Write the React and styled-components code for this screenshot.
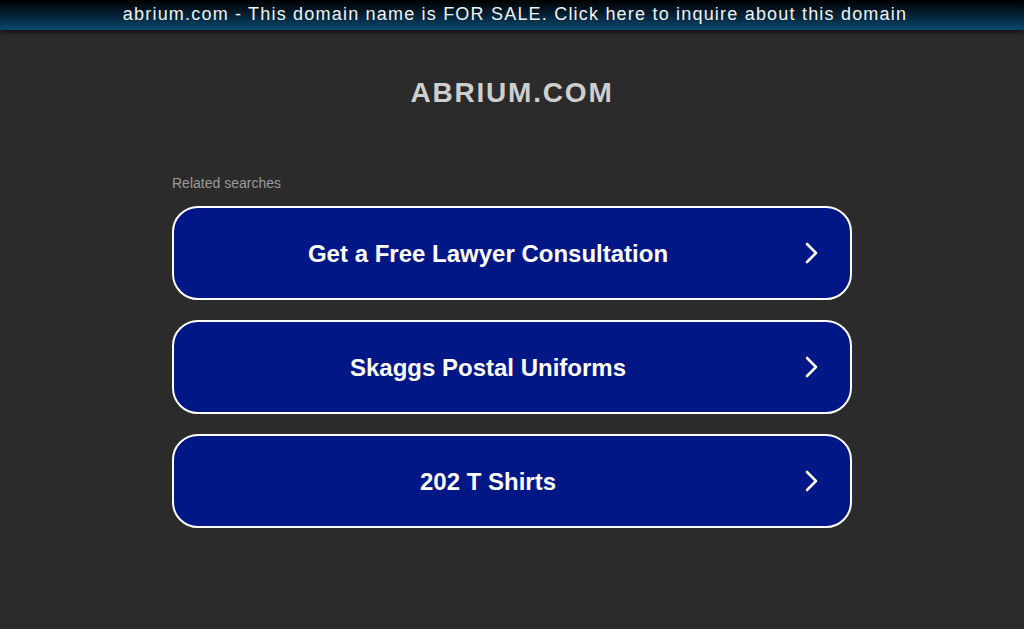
import React from 'react';
import styled, { createGlobalStyle } from 'styled-components';

const GlobalStyle = createGlobalStyle`
  html, body {
    margin: 0;
    padding: 0;
    background: #2b2b2b;
    font-family: "Liberation Sans", Arial, sans-serif;
  }
`;

const Page = styled.div`
  min-height: 629px;
  background: #2b2b2b;
  display: flex;
  flex-direction: column;
`;

const TopBar = styled.a`
  display: block;
  height: 30px;
  line-height: 28px;
  padding-left: 6px;
  text-align: center;
  font-size: 18px;
  letter-spacing: 1.2px;
  color: #f2f2f2;
  text-decoration: none;
  background: linear-gradient(to bottom, #000000 0%, #03243a 55%, #0b4a70 100%);
  box-shadow: 0 2px 6px rgba(0, 0, 0, 0.7);
`;

const Main = styled.div`
  width: 680px;
  margin: 0 auto;
  display: flex;
  flex-direction: column;
`;

const Title = styled.h1`
  margin: 46px 0 0;
  font-size: 28px;
  font-weight: 700;
  letter-spacing: 1.8px;
  color: #cfcfcf;
  text-align: center;
  line-height: 34px;
`;

const Label = styled.div`
  margin-top: 65px;
  font-size: 14px;
  color: #9a9a9a;
  line-height: 16px;
`;

const List = styled.div`
  margin-top: 15px;
  display: flex;
  flex-direction: column;
  gap: 20px;
`;

const Item = styled.a`
  box-sizing: border-box;
  height: 94px;
  display: flex;
  align-items: center;
  background: #021786;
  border: 2px solid #ffffff;
  border-radius: 26px;
  color: #ffffff;
  text-decoration: none;
`;

const ItemText = styled.span`
  flex: 1;
  padding-top: 2px;
  text-align: center;
  font-size: 24px;
  font-weight: 700;
`;

const Arrow = styled.span`
  box-sizing: border-box;
  width: 46px;
  padding-left: 2px;
  margin-right: 2px;
  display: flex;
`;

const Chevron = () => (
  <svg width="14" height="24" viewBox="0 0 14 24">
    <polyline points="3,3 12,12 3,21" fill="none" stroke="#fff" strokeWidth="2.6" strokeLinecap="round" strokeLinejoin="round" />
  </svg>
);

const searches = ['Get a Free Lawyer Consultation', 'Skaggs Postal Uniforms', '202 T Shirts'];

export default function App() {
  return (
    <Page>
      <GlobalStyle />
      <TopBar href="#">abrium.com - This domain name is FOR SALE. Click here to inquire about this domain</TopBar>
      <Main>
        <Title>ABRIUM.COM</Title>
        <Label>Related searches</Label>
        <List>
          {searches.map((s) => (
            <Item href="#" key={s}>
              <ItemText>{s}</ItemText>
              <Arrow><Chevron /></Arrow>
            </Item>
          ))}
        </List>
      </Main>
    </Page>
  );
}
